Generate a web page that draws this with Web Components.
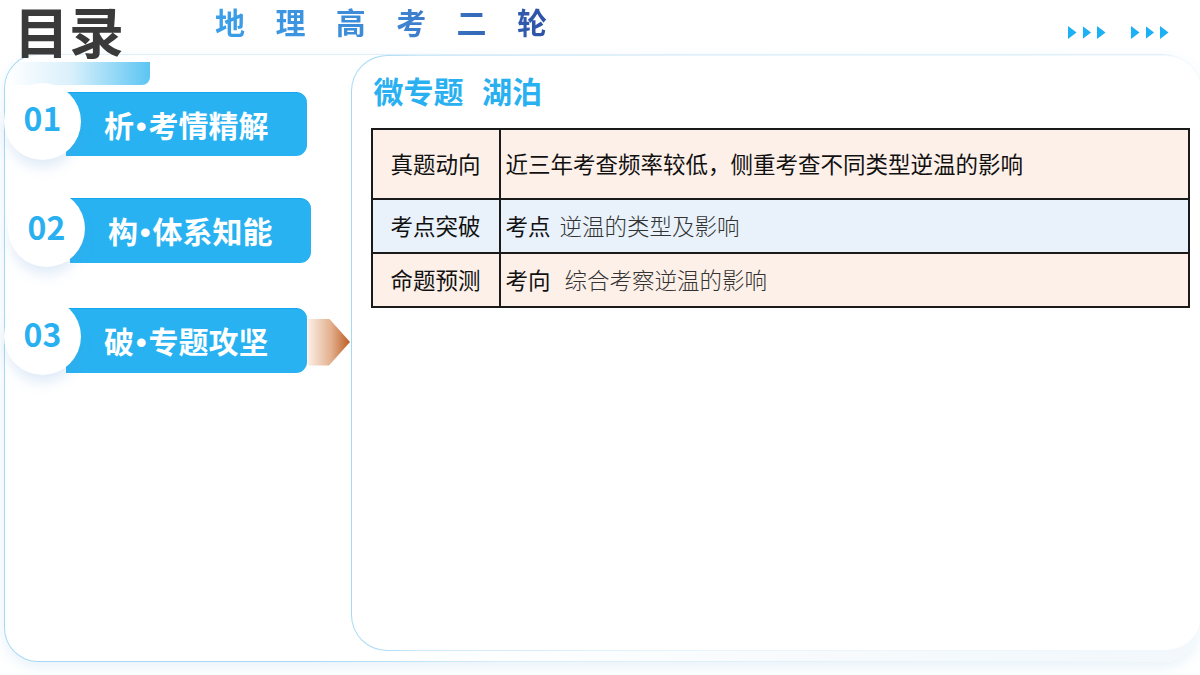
<!DOCTYPE html>
<html lang="zh">
<head>
<meta charset="utf-8">
<style>
    html, body { margin: 0; padding: 0; background: #fff; }
    body { width: 1200px; height: 675px; overflow: hidden; font-family: "Noto Sans CJK SC", sans-serif; }
</style>
</head>
<body>
<toc-page>
    <toc-menu-item slot="menu" num="01" style="--pill-top: 9px; --pill-h: 64px; --num-pad: 9px;">析<b>•</b>考情精解</toc-menu-item>
    <toc-menu-item slot="menu" num="02" style="--pill-top: 8px; --shift: 4px;">构<b>•</b>体系知能</toc-menu-item>
    <toc-menu-item slot="menu" num="03" active style="--pill-top: 10px; --num-pad: 7px;">破<b>•</b>专题攻坚</toc-menu-item>

    <topic-row label="真题动向" tone="warm" height="68">近三年考查频率较低，侧重考查不同类型逆温的影响</topic-row>
    <topic-row label="考点突破" tone="cool" height="52">考点 <span class="light">逆温的类型及影响</span></topic-row>
    <topic-row label="命题预测" tone="warm" height="52">考向 &nbsp;<span class="light">综合考察逆温的影响</span></topic-row>
</toc-page>

<script>
class TocMenuItem extends HTMLElement {
    constructor() {
        super()
        this.shadow = this.attachShadow({ mode: 'open' })
        this.render()
    }

    render() {
        const num = this.getAttribute('num') || ''
        const active = this.hasAttribute('active')
        this.shadow.innerHTML = /*html*/ `
            <style>
                :host {
                    display: flex;
                    align-items: flex-start;
                    margin-left: var(--shift, 0);
                    height: 78px;
                }
                .num {
                    position: relative;
                    z-index: 1;
                    flex: none;
                    width: 77px;
                    height: 77px;
                    margin-right: -15px;
                    border-radius: 50%;
                    background: #fff;
                    box-shadow: 0 10px 14px -3px rgba(90, 150, 215, 0.2);
                    display: flex;
                    align-items: center;
                    justify-content: center;
                    font-size: 32px;
                    font-weight: 700;
                    line-height: 1;
                    color: #29b0f1;
                    padding: 0 0 var(--num-pad, 5px) 0;
                    box-sizing: border-box;
                }
                .pill {
                    flex: none;
                    box-sizing: border-box;
                    width: 241px;
                    height: var(--pill-h, 65px);
                    margin-top: var(--pill-top, 10px);
                    padding-left: 38px;
                    border-radius: 0 11px 11px 0;
                    background: #29b2f1;
                    border-top: 1px solid #14a6ee;
                    color: #fff;
                    font-size: 30px;
                    font-weight: 700;
                    line-height: 63px;
                    white-space: nowrap;
                }
                ::slotted(b) {
                    font-family: "Liberation Sans", sans-serif;
                    font-weight: 700;
                    margin: 0 2px;
                }
                .arrow {
                    flex: none;
                    width: 42px;
                    height: 47px;
                    margin-top: 21px;
                    margin-left: 1px;
                    background: linear-gradient(90deg, #fbeee5, #e3b08e 55%, #bd5c22);
                    clip-path: polygon(0 0, 50% 0, 100% 50%, 50% 100%, 0 100%);
                }
            </style>
            <div class="num">${num}</div>
            <div class="pill"><slot></slot></div>
            ${active ? '<div class="arrow"></div>' : ''}
        `
    }
}

class TopicRow extends HTMLElement {
    constructor() {
        super()
        this.shadow = this.attachShadow({ mode: 'open' })
        this.render()
    }

    render() {
        const label = this.getAttribute('label') || ''
        const bg = this.getAttribute('tone') === 'cool' ? '#e9f2fb' : '#fdf0e9'
        const height = this.getAttribute('height') || 52
        this.shadow.innerHTML = /*html*/ `
            <style>
                :host {
                    display: grid;
                    grid-template-columns: 128px 1fr;
                    height: ${height}px;
                    background: ${bg};
                    color: #111;
                    font-size: 22.5px;
                    line-height: 1;
                }
                :host(:not(:last-child)) {
                    border-bottom: 2px solid #1a1a1a;
                }
                .label, .text {
                    display: flex;
                    align-items: center;
                    white-space: pre;
                    padding-bottom: 2px;
                }
                .label {
                    justify-content: center;
                    border-right: 2px solid #1a1a1a;
                }
                .text { padding-left: 5px; }
                ::slotted(.light) {
                    font-weight: 300;
                    color: #333;
                    margin-left: 4px;
                }
            </style>
            <div class="label">${label}</div>
            <div class="text"><span><slot></slot></span></div>
        `
    }
}

class TocPage extends HTMLElement {
    constructor() {
        super()
        this.shadow = this.attachShadow({ mode: 'open' })
        this.render()
    }

    render() {
        const tri = '<i></i><i></i><i></i>'
        this.shadow.innerHTML = /*html*/ `
            <style>
                :host {
                    display: block;
                    width: 1200px;
                    height: 675px;
                    overflow: hidden;
                    font-family: "Noto Sans CJK SC", sans-serif;
                }
                header {
                    display: flex;
                    align-items: flex-start;
                    height: 54px;
                    padding-left: 14px;
                }
                h1 {
                    position: relative;
                    z-index: 2;
                    margin: 0;
                    width: 201px;
                    font-size: 55px;
                    line-height: 58px;
                    font-weight: 700;
                    color: #3a3a3a;
                    white-space: nowrap;
                }
                .sub {
                    margin-top: 0;
                    font-size: 30px;
                    line-height: 42px;
                    font-weight: 700;
                    letter-spacing: 30.4px;
                    white-space: nowrap;
                    background: linear-gradient(90deg, #3a9fe9, #3f86d3 50%, #2b479c);
                    -webkit-background-clip: text;
                    background-clip: text;
                    color: transparent;
                }
                .tris {
                    display: flex;
                    margin: 26px 0 0 auto;
                    padding-right: 31.5px;
                    gap: 25.5px;
                }
                .tris span { display: flex; gap: 6px; }
                .tris i {
                    width: 8.5px;
                    height: 13px;
                    background: #1cb0f4;
                    clip-path: polygon(0 0, 100% 50%, 0 100%);
                }
                .card {
                    position: relative;
                    display: flex;
                    box-sizing: border-box;
                    height: 608px;
                    margin: 0 3px 0 4px;
                    border: 1.5px solid transparent;
                    border-radius: 34px;
                    background:
                        linear-gradient(90deg, #fff 30%, #f2f8fc 92%) padding-box,
                        linear-gradient(180deg, #e0f0fa 0 2px, transparent 2px) border-box,
                        linear-gradient(90deg, #a6d9f6 25%, #d8edf9 42%, #f4f9fc 100%) border-box;
                    box-shadow: 0 5px 14px rgba(120, 175, 225, 0.17);
                }
                .tab {
                    position: absolute;
                    top: 6.5px;
                    left: 2px;
                    width: 143px;
                    height: 23px;
                    border-radius: 0 0 8px 0;
                    background: linear-gradient(90deg, rgba(255,255,255,0), #d9f0fb 45%, #5cc5f3);
                }
                nav {
                    position: relative;
                    flex: none;
                    box-sizing: border-box;
                    width: 345.5px;
                    padding-top: 27.5px;
                    margin-left: -1px;
                    margin-right: 1px;
                    display: flex;
                    flex-direction: column;
                    gap: 29.5px;
                }
                .panel {
                    flex: 1;
                    box-sizing: border-box;
                    margin: 0 -6px 10px 0;
                    padding: 12px 10px 0 19px;
                    border: 1.5px solid transparent;
                    border-radius: 36px;
                    background:
                        linear-gradient(#fff, #fff) padding-box,
                        linear-gradient(90deg, #a6d9f6 3%, #cfe9f8 8%, #e8f3fb 40%, #f4f9fc 100%) border-box;
                }
                h2 {
                    margin: 0 0 16px 3px;
                    font-size: 30px;
                    line-height: 44px;
                    font-weight: 700;
                    word-spacing: 2.5px;
                    color: #29b0f1;
                    white-space: pre;
                }
                .table {
                    border: 2px solid #1a1a1a;
                    width: 819px;
                    box-sizing: border-box;
                }
            </style>
            <header>
                <h1>目录</h1>
                <div class="sub">地理高考二轮</div>
                <div class="tris"><span>${tri}</span><span>${tri}</span></div>
            </header>
            <section class="card">
                <div class="tab"></div>
                <nav><slot name="menu"></slot></nav>
                <main class="panel">
                    <h2>微专题  湖泊</h2>
                    <div class="table"><slot></slot></div>
                </main>
            </section>
        `
    }
}

customElements.define('toc-menu-item', TocMenuItem)
customElements.define('topic-row', TopicRow)
customElements.define('toc-page', TocPage)
</script>
</body>
</html>
